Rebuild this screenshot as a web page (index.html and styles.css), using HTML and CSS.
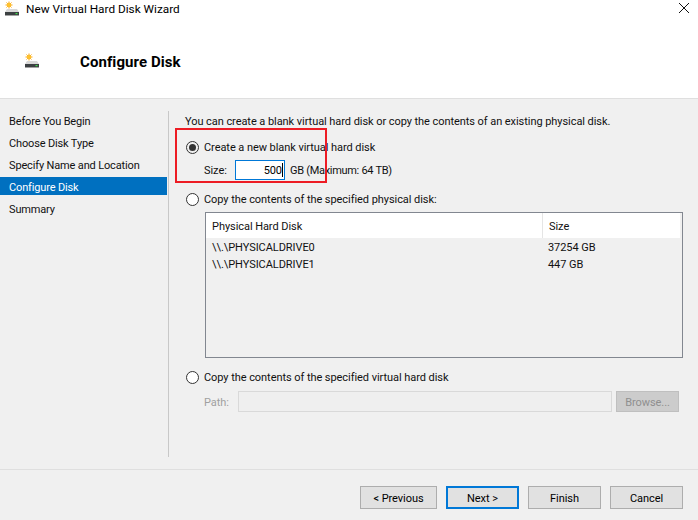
FILE: index.html
```html
<!DOCTYPE html>
<html lang="en">
<head>
<meta charset="utf-8">
<title>New Virtual Hard Disk Wizard</title>
<link rel="stylesheet" href="styles.css">
</head>
<body>
<div class="window">
  <svg width="0" height="0" class="defs"><defs>
    <symbol id="disk" viewBox="0 0 14 15">
      <path d="M4 0.500v7M0.500 4h7M1.500 1.500l5 5M6.500 1.500l-5 5" stroke="#f9a61a" stroke-width="1"/>
      <circle cx="4" cy="4" r="2.200" fill="#fdc12e"/>
      <path d="M2 8h10l2 3H0z" fill="#d8d8d8"/>
      <rect x="0" y="11" width="14" height="3.200" fill="#3c4042"/>
      <rect x="0" y="14" width="14" height="1" fill="#a3a3a3"/>
      <rect x="10.500" y="12" width="2" height="1.200" fill="#3fdc4a"/>
    </symbol>
  </defs></svg>
  <div class="titlebar">
    <svg class="title-icon"><use href="#disk"/></svg>
    <span class="title-text">New Virtual Hard Disk Wizard</span>
    <svg class="close" viewBox="0 0 10 10"><path d="M0 0l10 10M10 0L0 10" stroke="#111" stroke-width="1" fill="none"/></svg>
  </div>
  <header class="header">
    <svg class="header-icon"><use href="#disk"/></svg>
    <h1 class="heading">Configure Disk</h1>
  </header>
  <main class="body">
    <nav class="nav">
      <div class="nav-item">Before You Begin</div>
      <div class="nav-item">Choose Disk Type</div>
      <div class="nav-item">Specify Name and Location</div>
      <div class="nav-item active">Configure Disk</div>
      <div class="nav-item">Summary</div>
    </nav>
    <section class="content">
      <p class="intro">You can create a blank virtual hard disk or copy the contents of an existing physical disk.</p>
      <div class="radio-row first"><span class="radio checked"></span><span class="label">Create a new blank virtual hard disk</span></div>
      <div class="size-row">
        <span class="size-label label">Size:</span>
        <span class="size-input">500<span class="caret"></span></span>
        <span class="label max">GB (Maximum: 64 TB)</span>
      </div>
      <div class="radio-row second"><span class="radio"></span><span class="label">Copy the contents of the specified physical disk:</span></div>
      <div class="listbox">
        <div class="list-head">
          <div class="col-name label">Physical Hard Disk</div>
          <div class="col-size">Size</div>
        </div>
        <div class="list-row first-row"><div class="col-name">\\.\PHYSICALDRIVE0</div><div class="col-size">37254 GB</div></div>
        <div class="list-row"><div class="col-name">\\.\PHYSICALDRIVE1</div><div class="col-size">447 GB</div></div>
      </div>
      <div class="radio-row third"><span class="radio"></span><span class="label">Copy the contents of the specified virtual hard disk</span></div>
      <div class="path-row">
        <span class="path-label label">Path:</span>
        <span class="path-input"></span>
        <span class="browse">Browse...</span>
      </div>
      <div class="highlight"></div>
    </section>
  </main>
  <footer class="footer">
    <div class="btn prev">&lt; Previous</div>
    <div class="btn default">Next &gt;</div>
    <div class="btn">Finish</div>
    <div class="btn">Cancel</div>
  </footer>
</div>
</body>
</html>
```
FILE: styles.css
```css
* { box-sizing: border-box; }
html, body { margin: 0; padding: 0; }
body {
  width: 698px;
  height: 520px;
  overflow: hidden;
  font-family: Roboto, "Open Sans", "Liberation Sans", sans-serif;
  font-size: 11px;
  letter-spacing: -0.06px;
  line-height: 16px;
  color: #111;
  background: #f0f0f0;
}
.defs { position: absolute; }
.window { display: flex; flex-direction: column; height: 520px; }
.label { padding-top: 2px; }
.titlebar {
  height: 17px;
  background: #fff;
  display: flex;
  align-items: center;
  padding-left: 5px;
  position: relative;
}
.title-icon { width: 14px; height: 15px; }
.title-text { margin-left: 7px; padding-top: 1px; color: #000; font-size: 11.8px; letter-spacing: 0; }
.close { position: absolute; left: 679px; top: 3px; width: 10px; height: 10px; }
.header {
  height: 82px;
  background: #fff;
  border-bottom: 1px solid #dfdfdf;
  display: flex;
  align-items: center;
  padding: 8px 0 0 25px;
}
.header-icon { width: 14px; height: 15px; margin-bottom: 2px; }
.heading { margin: 0 0 0 41px; font-size: 15px; font-weight: 700; color: #000; line-height: 18px; letter-spacing: 0.07px; }
.body { flex: 1; display: flex; padding-top: 12px; min-height: 0; }
.nav {
  width: 169px;
  height: 346px;
  border-right: 1px solid #c8c8c8;
  letter-spacing: -0.15px;
}
.nav-item {
  width: 167px;
  height: 22px;
  padding: 3px 0 0 9px;
}
.nav-item.active { background: #0070c0; color: #fff; height: 18px; margin: 0 0 4px; padding-top: 3px; line-height: 15px; }
.content { position: relative; flex: 1; padding: 0 15px 0 16px; }
.intro { margin: 3px 0 0; white-space: nowrap; }
.radio-row { display: flex; align-items: center; gap: 5px; height: 16px; padding-left: 1px; }
.radio-row.first { margin-top: 9px; }
.radio-row.second { margin-top: 11px; }
.radio-row.third { margin-top: 11px; }
.radio {
  width: 13px;
  height: 13px;
  border-radius: 50%;
  border: 1px solid #333;
  background: #fff;
  display: block;
  position: relative;
}
.radio.checked { background: #f0f0f0; }
.radio.checked::after {
  content: "";
  position: absolute;
  left: 2px;
  top: 2px;
  width: 7px;
  height: 7px;
  border-radius: 50%;
  background: #333;
}
.size-row { display: flex; align-items: center; margin-top: 5px; height: 20px; padding-left: 19px; }
.size-label { width: 31px; }
.size-input {
  width: 50px;
  height: 20px;
  background: #fff;
  border: 1px solid #0078d7;
  text-align: right;
  padding-right: 1px;
  line-height: 19px;
  margin-right: 5px;
  color: #000;
}
.caret { display: inline-block; width: 1px; height: 14px; background: #000; vertical-align: -3px; }
.max { letter-spacing: -0.3px; }
.listbox {
  margin: 5px 0 0 20px;
  width: 478px;
  height: 146px;
  border: 1px solid #828790;
}
.list-head { display: flex; height: 25px; background: #fff; margin-right: 2px; align-items: center; }
.list-row { display: flex; height: 17px; padding-top: 1px; }
.first-row { margin-top: 1px; }
.col-name { width: 336px; padding-left: 6px; }
.col-size { padding-left: 6px; flex: 1; }
.list-head .col-size { border-left: 1px solid #e5e5e5; height: 25px; line-height: 27px; }
.path-row { display: flex; align-items: center; margin-top: 6px; height: 21px; padding-left: 19px; color: #a0a0a0; }
.path-label { width: 34px; }
.path-input { width: 374px; height: 21px; border: 1px solid #d9d9d9; background: #efefef; }
.browse {
  width: 63px;
  height: 21px;
  margin-left: 4px;
  background: #cccccc;
  border: 1px solid #bfbfbf;
  color: #8f8f8f;
  text-align: center;
  line-height: 21px;
}
.highlight {
  position: absolute;
  left: 6px;
  top: 17px;
  width: 152px;
  height: 55px;
  border: 2px solid #ed1c24;
}
.footer {
  height: 51px;
  border-top: 1px solid #dfdfdf;
  display: flex;
  justify-content: flex-end;
  gap: 9px;
  padding: 16px 15px 0 0;
}
.btn {
  width: 73px;
  height: 23px;
  background: #e1e1e1;
  border: 1px solid #adadad;
  text-align: center;
  line-height: 23px;
  color: #000;
}
.btn.prev { width: 77px; }
.btn.default { border: 2px solid #0078d7; line-height: 21px; }
```
